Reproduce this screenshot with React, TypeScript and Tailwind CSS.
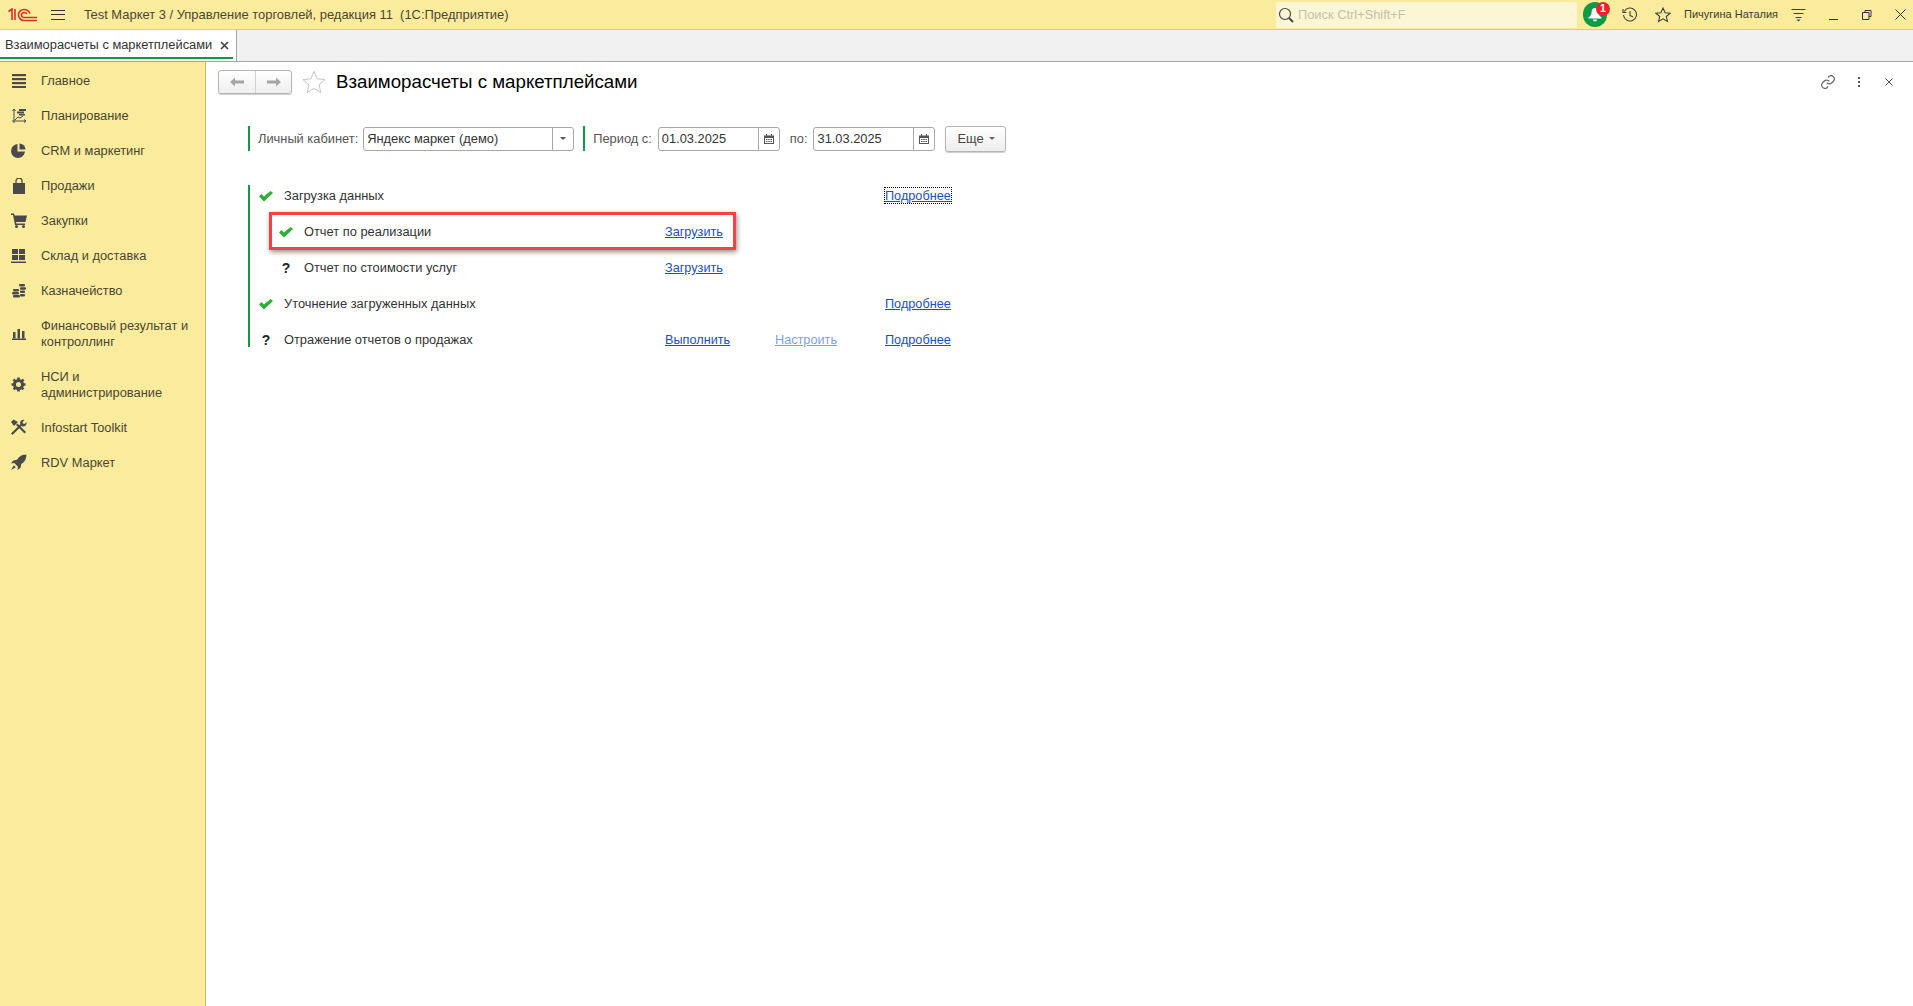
import type { ReactNode } from "react";

const navItems: { label: ReactNode; tall?: boolean; icon: ReactNode }[] = [
  {
    label: "Главное",
    icon: (
      <svg width="14" height="14" viewBox="0 0 14 14" fill="#4a4a4a">
        <rect y="0" width="14" height="2.2" />
        <rect y="4" width="14" height="2.2" />
        <rect y="8" width="14" height="2.2" />
        <rect y="12" width="14" height="2" />
      </svg>
    ),
  },
  {
    label: "Планирование",
    icon: (
      <svg width="16" height="16" viewBox="0 0 16 16" fill="none" stroke="#4a4a4a">
        <path d="M3 1v14M1 13h14M1.5 3L3 1l1.500 2M13 11.500l2 1.500-2 1.500" />
        <path d="M4 12l3-3 2 1 3-2" />
        <rect x="8" y="1" width="7" height="2" fill="#4a4a4a" stroke="none" />
        <rect x="6" y="3.500" width="7" height="2" fill="#4a4a4a" stroke="none" />
        <rect x="8" y="6" width="6" height="1.500" fill="#4a4a4a" stroke="none" />
      </svg>
    ),
  },
  {
    label: "CRM и маркетинг",
    icon: (
      <svg width="15" height="15" viewBox="0 0 15 15" fill="#4a4a4a">
        <path d="M6.500 1v7.500H14A7 7 0 1 1 6.500 1z" />
        <path d="M8.500 0.500A6 6 0 0 1 14.500 6.500H8.500z" />
      </svg>
    ),
  },
  {
    label: "Продажи",
    icon: (
      <svg width="14" height="16" viewBox="0 0 14 16" fill="#4a4a4a">
        <path d="M1 5h12v11H1z" />
        <path d="M4 7V3a3 3 0 0 1 6 0v4" fill="none" stroke="#4a4a4a" strokeWidth="1.300" />
      </svg>
    ),
  },
  {
    label: "Закупки",
    icon: (
      <svg width="16" height="15" viewBox="0 0 16 15" fill="#4a4a4a">
        <path d="M0 0.500h3l0.600 2H16l-1.500 6.500H5l0.300 1.500H14V12H4L2 2H0z" />
        <circle cx="5.500" cy="13.500" r="1.500" />
        <circle cx="12.500" cy="13.500" r="1.500" />
      </svg>
    ),
  },
  {
    label: "Склад и доставка",
    icon: (
      <svg width="15" height="14" viewBox="0 0 15 14" fill="#4a4a4a">
        <rect x="1" y="0" width="6" height="5" />
        <rect x="8" y="0" width="6" height="5" />
        <rect x="1" y="6" width="6" height="5" />
        <rect x="8" y="6" width="6" height="5" />
        <rect x="0" y="12.500" width="15" height="1.500" />
      </svg>
    ),
  },
  {
    label: "Казначейство",
    icon: (
      <svg width="14" height="14" viewBox="0 0 14 14" fill="#4a4a4a">
        <rect x="7" y="0" width="6" height="2.500" rx="1" />
        <rect x="8" y="3.200" width="6" height="2.500" rx="1" />
        <rect x="1" y="5" width="6" height="2.500" rx="1" />
        <rect x="0" y="8" width="7" height="2.500" rx="1" />
        <rect x="8" y="6.500" width="5" height="2.500" rx="1" />
        <rect x="1" y="11" width="7" height="2.500" rx="1" />
        <rect x="8" y="10" width="5" height="2.500" rx="1" />
      </svg>
    ),
  },
  {
    label: (
      <>
        Финансовый результат и
        <br />
        контроллинг
      </>
    ),
    tall: true,
    icon: (
      <svg width="14" height="12" viewBox="0 0 14 12" fill="#4a4a4a">
        <rect x="1" y="4" width="2.500" height="6.500" />
        <rect x="5.500" y="1" width="2.500" height="9.500" />
        <rect x="10" y="3" width="2.500" height="7.500" />
        <rect x="0" y="10.500" width="14" height="1.500" />
      </svg>
    ),
  },
  {
    label: (
      <>
        НСИ и
        <br />
        администрирование
      </>
    ),
    tall: true,
    icon: (
      <svg width="15" height="15" viewBox="0 0 15 15">
        <circle cx="7.500" cy="7.500" r="4" fill="none" stroke="#4a4a4a" strokeWidth="3" />
        <path
          d="M7.500 0.500v14M0.500 7.500h14M2.500 2.500l10 10M12.500 2.500l-10 10"
          stroke="#4a4a4a"
          strokeWidth="2.600"
          strokeDasharray="2.600 8.800"
          fill="none"
        />
      </svg>
    ),
  },
  {
    label: "Infostart Toolkit",
    icon: (
      <svg width="17" height="17" viewBox="0 0 17 17" fill="#4a4a4a">
        <path d="M1 14.500L11 4.500l1.500 1.500-10 10z" />
        <path d="M10 3.500c.5-2 2.500-3 4.500-2.500l-2 2 .5 1.500 1.500.5 2-2c.5 2-.5 4-2.500 4.500-1.500.5-3-.5-4-4z" />
        <path d="M14.500 14.500L6 6l1.500-1.500 8.500 8.500z" />
        <path d="M1 3l2.500-2.500L8 3 4 7z" />
      </svg>
    ),
  },
  {
    label: "RDV Маркет",
    icon: (
      <svg width="17" height="17" viewBox="0 0 16 16" fill="#4a4a4a">
        <path d="M15.500 0.500c-4 0-7 1.500-9 5L3 6 1 9l3-0.500L7.500 12 7 15l3-2 0.500-3.500c3.500-2 5-5 5-9.500z" />
        <path d="M3.500 10.500L1 15l4.500-2.500z" />
      </svg>
    ),
  },
];

function Check() {
  return (
    <svg width="14" height="11" viewBox="0 0 14 11" fill="#2fae3a">
      <path d="M0 5.500L2.500 3 5 5.500 11.500 0 14 2 5 10.500z" />
    </svg>
  );
}

function Question() {
  return <span className="text-[14px] font-bold leading-none text-[#222]">?</span>;
}

function Link({ children, faded }: { children: ReactNode; faded?: boolean }) {
  return (
    <a className={faded ? "text-[12.700px] text-[#7f9fe3] underline" : "text-[12.700px] text-[#1c4fbd] underline"}>
      {children}
    </a>
  );
}

function Row({
  icon,
  text,
  sub,
  col1,
  col2,
  col3,
}: {
  icon: ReactNode;
  text: string;
  sub?: boolean;
  col1?: ReactNode;
  col2?: ReactNode;
  col3?: ReactNode;
}) {
  return (
    <div
      className={
        sub
          ? "ml-5 grid h-5 grid-cols-[34px_361px_110px_110px_auto] items-center"
          : "grid h-5 grid-cols-[34px_381px_110px_110px_auto] items-center"
      }
    >
      <div className="flex justify-center pr-[2px]">{icon}</div>
      <div className="text-[#333]">{text}</div>
      <div>{col1}</div>
      <div>{col2}</div>
      <div>{col3}</div>
    </div>
  );
}

function DateField({ value }: { value: string }) {
  return (
    <div className="flex h-6 w-[122px] items-center rounded-[3px] border border-[#a8a8a8] bg-white">
      <div className="flex-1 pl-[3px] text-[#333]">{value}</div>
      <div className="flex h-full w-[21px] items-center justify-center border-l border-[#a8a8a8]">
        <svg width="10" height="10" viewBox="0 0 10 10" fill="#555">
          <path d="M0 1.500h2V0h1v1.500h4V0h1v1.500h2V10H0zM1 4v5h8V4z" />
          <rect x="2" y="5" width="1.500" height="1" />
          <rect x="4.300" y="5" width="1.500" height="1" />
          <rect x="6.500" y="5" width="1.500" height="1" />
          <rect x="2" y="7" width="1.500" height="1" />
          <rect x="4.300" y="7" width="1.500" height="1" />
          <rect x="6.500" y="7" width="1.500" height="1" />
        </svg>
      </div>
    </div>
  );
}

export default function App() {
  return (
    <div className="flex h-[1006px] w-[1913px] flex-col overflow-hidden bg-white font-['Liberation_Sans',Arial,sans-serif] text-[12.850px]">
      {/* верхняя панель */}
      <div className="flex h-[30px] shrink-0 items-center border-b border-[#d9cb80] bg-[#fbec9d]">
        <svg width="30" height="14" viewBox="0 0 30 14" fill="none" stroke="#e02b26" strokeWidth="1.600" className="ml-2">
          <path d="M0.500 3.500L4 1v11" />
          <path d="M7 1v11" />
          <path d="M29 12.500H16a5.500 5.500 0 1 1 0-11c3 0 5 1.500 6 4" />
          <path d="M29 9.500H16a2.500 2.500 0 1 1 0-5c1.500 0 2.500 .5 3 1.500" />
        </svg>
        <div className="ml-[13px] flex w-[14px] flex-col gap-[3.500px]">
          <div className="h-px bg-[#333]" />
          <div className="h-px bg-[#333]" />
          <div className="h-px bg-[#333]" />
        </div>
        <div className="ml-[19px] text-[12.950px] text-[#4b4632]">Test Маркет 3 / Управление торговлей, редакция 11&nbsp; (1С:Предприятие)</div>
        <div className="ml-auto flex h-[26px] w-[301px] items-center rounded-[2px] bg-[#fdf6d4] pl-[2px] text-[#c4c0ac]">
          <svg width="16" height="16" viewBox="0 0 16 16" fill="none" stroke="#444" className="mr-[4px]">
            <circle cx="7" cy="7" r="5.500" strokeWidth="1.200" />
            <path d="M11 11l4 4" strokeWidth="2" />
          </svg>
          Поиск Ctrl+Shift+F
        </div>
        <div className="relative ml-[6px] h-[25px] w-[24px]">
          <div className="flex h-full w-full items-center justify-center rounded-full bg-[#0f9a47]">
            <svg width="14" height="15" viewBox="0 0 14 15" fill="#fff">
              <path d="M7 1c2.500 0 3.500 2 3.500 5 0 2 1.500 3 3 4.500v1H.500v-1C2 9 3.500 8 3.500 6 3.500 3 4.500 1 7 1z" />
              <path d="M5 12.500h4a2 2 0 0 1-4 0z" />
            </svg>
          </div>
          <div className="absolute left-[13px] top-0 flex h-[14px] w-[14px] items-center justify-center rounded-full bg-[#e8262a] text-[10.500px] font-bold text-white">
            1
          </div>
        </div>
        <svg width="16" height="16" viewBox="0 0 16 16" fill="none" stroke="#3f3f3f" strokeWidth="1.100" className="ml-[15px]">
          <path d="M2.200 4.500A6.500 6.500 0 1 1 1.500 8" />
          <path d="M1 2v3.500h3.500" />
          <path d="M8 4v4.500l3 1.500" />
        </svg>
        <svg width="16" height="16" viewBox="0 0 16 16" fill="none" stroke="#3f3f3f" strokeWidth="1.100" className="ml-[17px]">
          <path d="M8 1l2.100 4.700 5 .5-3.800 3.300 1.100 5L8 11.900l-4.400 2.600 1.100-5L.9 6.200l5-.5z" />
        </svg>
        <div className="ml-[13px] w-[93px] whitespace-nowrap text-[11px] text-[#3d3a2c]">Пичугина Наталия</div>
        <svg width="15" height="14" viewBox="0 0 14 14" fill="#3f3f3f" className="ml-[14px]">
          <rect x="0" y="1" width="14" height="1" />
          <rect x="2" y="5" width="10" height="1" />
          <rect x="4" y="9" width="6" height="1" />
          <path d="M5 11.500h4l-2 2z" />
        </svg>
        <div className="ml-[23px] mt-[9px] h-px w-[9px] bg-[#333]" />
        <svg width="10" height="10" viewBox="0 0 10 10" fill="none" stroke="#333" className="ml-[24px]">
          <path d="M3 2.500V.5h6v6H7M.5 2.500h6.500v7H.5z" />
        </svg>
        <svg width="11" height="11" viewBox="0 0 11 11" fill="none" stroke="#333" className="ml-[23px] mr-[7px]">
          <path d="M.5.500l10 10M10.500.500l-10 10" />
        </svg>
      </div>

      {/* вкладки */}
      <div className="flex h-[32px] shrink-0 border-b border-[#a5a5a5] bg-[#f0f0f0]">
        <div className="w-[237px] border-r border-[#a5a5a5] bg-white">
          <div className="flex h-[29px] w-[233px] items-center border-b-2 border-[#0f9a47] pl-[5px] pt-[3px] text-[#333]">
            Взаиморасчеты с маркетплейсами
            <svg width="9" height="9" viewBox="0 0 9 9" stroke="#444" strokeWidth="1.700" className="ml-[8px]">
              <path d="M1 1l7 7M8 1l-7 7" />
            </svg>
          </div>
        </div>
      </div>

      <div className="flex flex-1">
        {/* левое меню */}
        <div className="w-[206px] shrink-0 border-r border-[#c9bd7d] bg-[#fbec9d] pt-[1px] text-[#4a4632]">
          {navItems.map((item, i) => (
            <div key={i} className={item.tall ? "flex h-[51px] items-center" : "flex h-[35px] items-center"}>
              <div className="mr-[4px] flex w-[37px] justify-center">{item.icon}</div>
              <div className="leading-[16px]">{item.label}</div>
            </div>
          ))}
        </div>

        {/* форма */}
        <div className="relative flex-1 pl-[12px]">
          <div className="flex h-[40px] items-center">
            <div className="flex h-[24px] w-[74px] rounded-[3px] border border-[#b5b5b5] bg-gradient-to-b from-white to-[#eeeeee] shadow-[0_1px_1px_rgba(0,0,0,0.2)]">
              <div className="flex w-[37px] items-center justify-center border-r border-[#cfcfcf]">
                <svg width="14" height="10" viewBox="0 0 14 10" fill="#a5a5a5">
                  <path d="M0 5l5-4.500V3.500h9v3H5v3z" />
                </svg>
              </div>
              <div className="flex flex-1 items-center justify-center">
                <svg width="14" height="10" viewBox="0 0 14 10" fill="#a5a5a5">
                  <path d="M14 5L9 .5V3.500H0v3h9v3z" />
                </svg>
              </div>
            </div>
            <svg width="24" height="24" viewBox="0 0 24 24" fill="none" stroke="#c4c4c4" className="ml-[10px]">
              <path d="M12 1.500l3.200 7.300 7.800.8-5.900 5.200 1.700 7.700-6.800-4-6.800 4 1.700-7.700L1 9.600l7.800-.8z" />
            </svg>
            <h1 className="ml-[10px] mt-[1px] text-[18.700px] text-black">Взаиморасчеты с маркетплейсами</h1>
            <svg width="16" height="16" viewBox="0 0 24 24" fill="none" stroke="#666" strokeWidth="1.800" className="ml-auto">
              <path d="M10 13a5 5 0 0 0 7.500.5l3-3a5 5 0 0 0-7-7l-1.700 1.700" />
              <path d="M14 11a5 5 0 0 0-7.500-.5l-3 3a5 5 0 0 0 7 7l1.700-1.700" />
            </svg>
            <div className="ml-[22px] flex flex-col gap-[2px]">
              <div className="h-[2px] w-[2px] bg-[#555]" />
              <div className="h-[2px] w-[2px] bg-[#555]" />
              <div className="h-[2px] w-[2px] bg-[#555]" />
            </div>
            <svg width="8" height="8" viewBox="0 0 8 8" stroke="#555" className="ml-[25px] mr-[20px]">
              <path d="M.5.500l7 7M7.500.500l-7 7" />
            </svg>
          </div>

          {/* отбор */}
          <div className="ml-[30px] mt-[24px] flex h-[25px] items-center text-[#555]">
            <div className="flex h-full items-center border-l-2 border-[#0f9a47] pl-[8px]">Личный кабинет:</div>
            <div className="ml-[5px] flex h-6 w-[211px] items-center rounded-[3px] border border-[#a8a8a8] bg-white">
              <div className="flex-1 pl-[3px] text-[#333]">Яндекс маркет (демо)</div>
              <div className="flex h-full w-[21px] items-center justify-center border-l border-[#a8a8a8]">
                <div className="h-0 w-0 border-x-[3px] border-t-[3px] border-x-transparent border-t-[#555]" />
              </div>
            </div>
            <div className="ml-[9px] flex h-full items-center border-l-2 border-[#0f9a47] pl-[8px]">Период с:</div>
            <div className="ml-[6px]">
              <DateField value="01.03.2025" />
            </div>
            <div className="ml-[10px]">по:</div>
            <div className="ml-[6px]">
              <DateField value="31.03.2025" />
            </div>
            <div className="ml-[10px] flex h-[26px] w-[61px] items-center justify-center gap-[5px] rounded-[3px] border border-[#b5b5b5] bg-gradient-to-b from-white to-[#eeeeee] text-[#444] shadow-[0_1px_1px_rgba(0,0,0,0.2)]">
              Еще
              <div className="h-0 w-0 border-x-[3px] border-t-[3px] border-x-transparent border-t-[#666]" />
            </div>
          </div>

          {/* шаги */}
          <div className="relative ml-[30px] mt-[34px] flex h-[162px] flex-col gap-4 border-l-2 border-[#0f9a47] pt-[1px]">
            <Row
              icon={<Check />}
              text="Загрузка данных"
              col3={
                <span className="outline-1 outline-dotted outline-black">
                  <Link>Подробнее</Link>
                </span>
              }
            />
            <Row sub icon={<Check />} text="Отчет по реализации" col1={<Link>Загрузить</Link>} />
            <Row sub icon={<Question />} text="Отчет по стоимости услуг" col1={<Link>Загрузить</Link>} />
            <Row icon={<Check />} text="Уточнение загруженных данных" col3={<Link>Подробнее</Link>} />
            <Row
              icon={<Question />}
              text="Отражение отчетов о продажах"
              col1={<Link>Выполнить</Link>}
              col2={<Link faded>Настроить</Link>}
              col3={<Link>Подробнее</Link>}
            />
            {/* красная рамка поверх строки */}
            <div className="absolute left-[19px] top-[27px] h-[38px] w-[467px] border-[3px] border-[#f44145] shadow-[1px_2px_5px_rgba(0,0,0,0.45)]" />
          </div>
        </div>
      </div>
    </div>
  );
}
